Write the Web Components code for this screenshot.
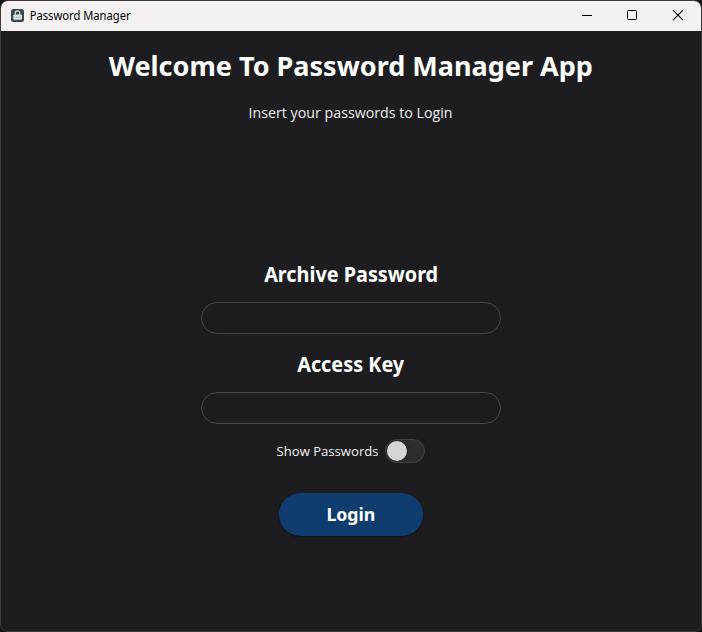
<!DOCTYPE html>
<html lang="en">
<head>
<meta charset="utf-8">
<title>Password Manager</title>
<style>
html,body{margin:0;height:100%;background:#141618;overflow:hidden}
body{font-family:"Noto Sans","Open Sans",sans-serif;color:#fff}
</style>
</head>
<body>
<app-window>
  <title-bar slot="bar">Password Manager</title-bar>
  <login-view></login-view>
</app-window>
<script>
const define = (name, html, init) => customElements.define(name, class extends HTMLElement {
  constructor(){ super(); this.attachShadow({mode:'open'}).innerHTML = html; }
  connectedCallback(){ if (init) init(this); }
});

// Text label condensed horizontally to the width given in its "fit" attribute.
define('fit-label', `<style>
:host{display:flex;justify-content:center;white-space:nowrap;width:var(--fit)}
span{display:block;flex:none}
</style><span><slot></slot></span>`, el => {
  const w = parseFloat(el.getAttribute('fit'));
  el.style.setProperty('--fit', w + 'px');
  const s = el.shadowRoot.querySelector('span');
  s.style.transform = 'scaleX(' + w / s.getBoundingClientRect().width + ')';
});

define('app-window', `<style>
:host{display:flex;flex-direction:column;box-sizing:border-box;width:702px;height:632px;border:1px solid #3c3c3e;border-radius:8px;overflow:hidden;background:#1d1d1f}
</style><slot name="bar"></slot><slot></slot>`);

define('title-bar', `<style>
:host{display:flex;align-items:center;height:30px;background:#f5f1f3;color:#000;font-size:12px;line-height:16px;flex:none}
.icon{margin:0 0 1px 10px;display:block}
fit-label{margin-left:6px;flex:none}
nav{display:flex;margin-left:auto;height:30px}
nav svg{display:block;width:46px;height:30px}
nav svg:first-child{width:45px}
</style>
<svg class="icon" width="13" height="13" viewBox="0 0 13 13"><rect width="13" height="13" rx="2.5" fill="#3b464e"/><path d="M4.3 5.7V4a2.2 2.2 0 0 1 4.4 0v1.7" fill="none" stroke="#dce0e2" stroke-width="1.2"/><rect x="2.3" y="5.5" width="8.6" height="5.2" rx="1" fill="#e4e7e8"/><path d="M3.5 8.2h6" stroke="#8b9499" stroke-width=".9" stroke-dasharray="1 .5"/></svg>
<fit-label fit="101"><slot></slot></fit-label>
<nav>
<svg viewBox="0 0 45 30"><path d="M18 14.5h10" stroke="#000"/></svg>
<svg viewBox="0 0 46 30"><rect x="18.5" y="9.5" width="9" height="9" rx="1" fill="none" stroke="#000"/></svg>
<svg viewBox="0 0 46 30"><path d="M18 9.2l10 10M28 9.2l-10 10" stroke="#000" stroke-width="1.1"/></svg>
</nav>`);

define('text-field', `<style>
:host{display:block}
input{display:block;box-sizing:border-box;width:300px;height:32px;margin:0;padding:0 16px;border:1px solid #47474a;border-radius:16px;background:#1d1d1f;color:#fff;outline:0}
</style><input type="text">`);

define('toggle-switch', `<style>
:host{display:flex;align-items:center;box-sizing:border-box;width:40px;height:24px;padding-left:1px;border:1px solid #424244;border-radius:12px;background:#2d2d2f}
i{width:20px;height:20px;border-radius:50%;background:#d5d5d5;box-shadow:1px 0 2px #0006}
</style><i></i>`);

define('pill-button', `<style>
:host{display:block}
button{display:flex;align-items:center;justify-content:center;width:144px;height:43px;padding:0 0 2px;border:0;border-radius:21.5px;background:#0f3d70;color:#fff;font:bold 18px/24px "Noto Sans","Open Sans",sans-serif;box-shadow:0 1px 2px #0007}
</style><button><slot></slot></button>`);

define('login-view', `<style>
:host{display:flex;flex-direction:column;align-items:center;flex:1;padding-top:16px}
.h1{font-weight:700;font-size:27px;line-height:38px}
.sub{font-family:"Open Sans","Noto Sans",sans-serif;font-size:15px;line-height:20px;margin-top:17px;color:#eee}
.h2{font-weight:700;font-size:21px;line-height:28px}
.a{margin-top:138px}
.b{margin-top:16px}
text-field{margin-top:14px}
.row{display:flex;align-items:center;gap:6px;margin-top:15px;font-family:"Open Sans","Noto Sans",sans-serif;font-size:13.5px;line-height:24px;color:#f2f2f2}
pill-button{margin-top:30px}
</style>
<fit-label class="h1" fit="484">Welcome To Password Manager App</fit-label>
<fit-label class="sub" fit="204">Insert your passwords to Login</fit-label>
<fit-label class="h2 a" fit="174">Archive Password</fit-label>
<text-field></text-field>
<fit-label class="h2 b" fit="107">Access Key</fit-label>
<text-field></text-field>
<div class="row"><fit-label fit="102">Show Passwords</fit-label><toggle-switch></toggle-switch></div>
<pill-button><fit-label fit="49">Login</fit-label></pill-button>`);
</script>
</body>
</html>
